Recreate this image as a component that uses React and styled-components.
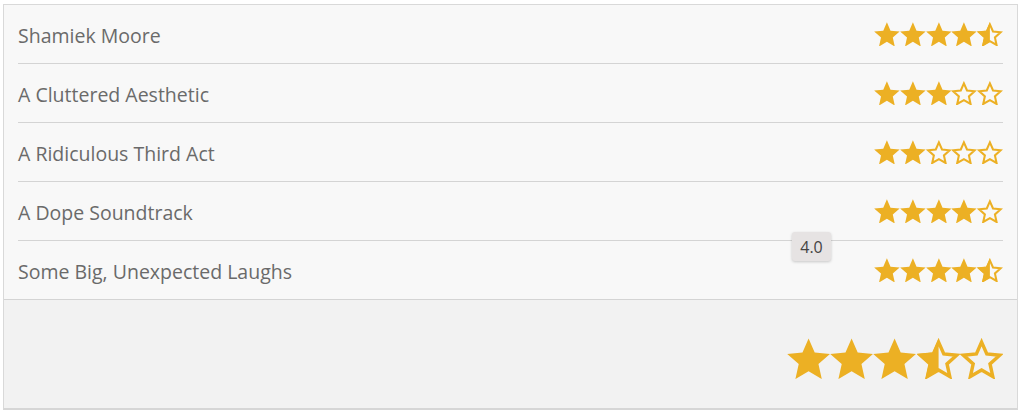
import React from "react";
import styled, { createGlobalStyle } from "styled-components";

const GlobalStyle = createGlobalStyle`
  body {
    margin: 0;
    background: #ffffff;
    font-family: "Open Sans", "Liberation Sans", sans-serif;
  }
`;

const ratings = [
  { label: "Shamiek Moore", value: 4.5 },
  { label: "A Cluttered Aesthetic", value: 3 },
  { label: "A Ridiculous Third Act", value: 2 },
  { label: "A Dope Soundtrack", value: 4 },
  { label: "Some Big, Unexpected Laughs", value: 4.5, tip: "4.0" },
];

const GOLD = "#ecb024";

// regular five point star, viewBox 0 0 100 95
const starPoints = (r, ri, cx, cy) => {
  const pts = [];
  for (let i = 0; i < 10; i++) {
    const rad = i % 2 === 0 ? r : ri;
    const a = (Math.PI / 5) * i - Math.PI / 2;
    pts.push(`${(cx + rad * Math.cos(a)).toFixed(2)},${(cy + rad * Math.sin(a)).toFixed(2)}`);
  }
  return pts.join(" ");
};

const FULL = starPoints(52, 24, 50, 53);
const OUTLINE = starPoints(44, 20.5, 50, 53.5);

const Star = ({ fill, size, id }) => {
  const w = size;
  const h = size * 0.95;
  return (
    <svg width={w} height={h} viewBox="0 0 100 95">
      <defs>
        <clipPath id={id}>
          <rect x="0" y="0" width="50" height="95" />
        </clipPath>
      </defs>
      {fill === "empty" || fill === "half" ? (
        <polygon
          points={OUTLINE}
          fill="none"
          stroke={GOLD}
          strokeWidth="8"
          strokeLinejoin="miter"
        />
      ) : null}
      {fill === "full" && <polygon points={FULL} fill={GOLD} />}
      {fill === "half" && <polygon points={FULL} fill={GOLD} clipPath={`url(#${id})`} />}
    </svg>
  );
};

const Stars = ({ value, size, name }) => (
  <StarRow>
    {[0, 1, 2, 3, 4].map((i) => {
      const fill = value >= i + 1 ? "full" : value >= i + 0.5 ? "half" : "empty";
      return <Star key={i} fill={fill} size={size} id={`${name}-${i}`} />;
    })}
  </StarRow>
);

const App = () => (
  <>
    <GlobalStyle />
    <Page>
      <Card>
        <List>
          {ratings.map((r, i) => (
            <Row key={r.label}>
              <Label>{r.label}</Label>
              <Stars value={r.value} size={25.8} name={`row${i}`} />
              {r.tip && <Tooltip>{r.tip}</Tooltip>}
            </Row>
          ))}
        </List>
        <Footer>
          <Stars value={3.5} size={43.2} name="total" />
        </Footer>
      </Card>
    </Page>
  </>
);

const Page = styled.div`
  padding: 4px 4px 0 3px;
`;

const Card = styled.div`
  width: 1015px;
  box-sizing: border-box;
  border: 1px solid #d9d9d9;
  border-bottom: 2px solid #d6d6d6;
  background: #f8f8f8;
`;

const List = styled.div`
  padding: 0 14px;
`;

const Row = styled.div`
  position: relative;
  height: 58px;
  display: flex;
  align-items: center;
  justify-content: space-between;
  border-bottom: 1px solid #d4d4d4;
  &:last-child {
    border-bottom: none;
  }
`;

const Label = styled.span`
  font-size: 19.5px;
  color: #6a6a6a;
  padding-top: 3px;
`;

const StarRow = styled.div`
  display: flex;
  align-items: center;
  svg {
    display: block;
  }
`;

const Tooltip = styled.div`
  position: absolute;
  left: 774px;
  top: -9px;
  width: 39px;
  height: 29px;
  box-sizing: border-box;
  display: flex;
  align-items: center;
  justify-content: center;
  background: #e6e3e3;
  border-radius: 3px;
  box-shadow: 0 1px 3px rgba(0, 0, 0, 0.2);
  font-size: 16px;
  color: #444444;
`;

const Footer = styled.div`
  height: 109px;
  box-sizing: border-box;
  border-top: 1px solid #d4d4d4;
  background: #f2f2f2;
  display: flex;
  align-items: flex-end;
  justify-content: flex-end;
  padding: 0 14px 29px;
`;

export default App;
